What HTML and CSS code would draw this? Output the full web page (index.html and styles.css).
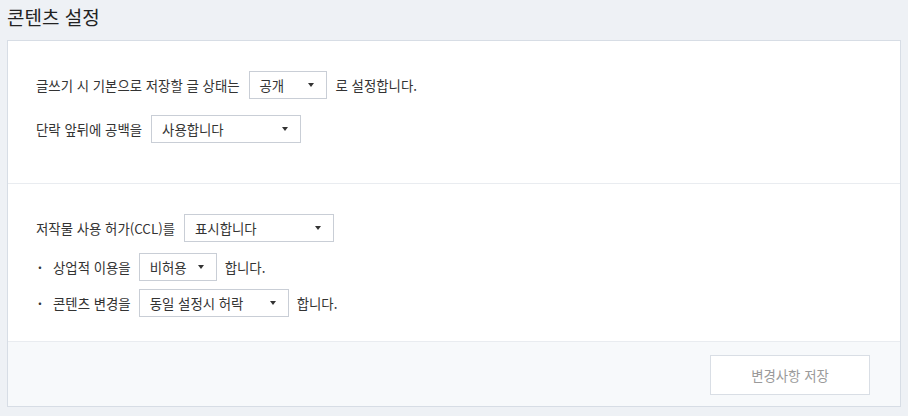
FILE: index.html
```html
<!DOCTYPE html>
<html lang="ko">
<head>
<meta charset="utf-8">
<link rel="stylesheet" href="styles.css">
</head>
<body>
<h1 class="page-title">콘텐츠 설정</h1>
<div class="panel">
  <div class="section">
    <div class="row">
      <span>글쓰기 시 기본으로 저장할 글 상태는</span>
      <span class="select w77"><span>공개</span><i class="arrow"></i></span>
      <span>로 설정합니다.</span>
    </div>
    <div class="row row-gap1">
      <span>단락 앞뒤에 공백을</span>
      <span class="select w150"><span>사용합니다</span><i class="arrow"></i></span>
    </div>
  </div>
  <div class="section section2">
    <div class="row">
      <span>저작물 사용 허가(CCL)를</span>
      <span class="select w150"><span>표시합니다</span><i class="arrow"></i></span>
    </div>
    <div class="row sub row-gap2">
      <span class="bullet">·</span>
      <span>상업적 이용을</span>
      <span class="select w77"><span>비허용</span><i class="arrow"></i></span>
      <span>합니다.</span>
    </div>
    <div class="row sub row-gap3">
      <span class="bullet">·</span>
      <span>콘텐츠 변경을</span>
      <span class="select w150"><span>동일 설정시 허락</span><i class="arrow"></i></span>
      <span>합니다.</span>
    </div>
  </div>
  <div class="footer">
    <button class="save">변경사항 저장</button>
  </div>
</div>
</body>
</html>
```
FILE: styles.css
```css
html, body {
  margin: 0;
  padding: 0;
}
body {
  background: #eef1f5;
  font-family: "Noto Sans CJK KR", "Noto Sans", sans-serif;
  color: #333;
  font-size: 13.4px;
  width: 908px;
  height: 416px;
  overflow: hidden;
}
.page-title {
  margin: 0;
  padding: 3px 0 0 7px;
  height: 37px;
  font-size: 19px;
  font-weight: 400;
  line-height: 28px;
  color: #222;
}
.panel {
  margin: 0 7px;
  background: #fff;
  border: 1px solid #d7dde5;
}
.section {
  padding: 30px 28px 40px;
  border-bottom: 1px solid #e9ecf0;
}
.section2 {
  padding-bottom: 24px;
}
.row {
  display: flex;
  align-items: center;
  gap: 9px;
  height: 28px;
}
.row-gap1 { margin-top: 16px; }
.row-gap2 { margin-top: 11px; }
.row-gap3 { margin-top: 8px; }
.sub { gap: 8px; }
.bullet {
  width: 8px;
  margin-right: 1px;
  text-align: center;
  font-weight: 700;
}
.select {
  box-sizing: border-box;
  height: 28px;
  border: 1px solid #c9ced6;
  display: flex;
  align-items: center;
  justify-content: space-between;
  padding: 0 12px 0 10px;
  background: #fff;
}
.w77 { width: 78px; }
.w150 { width: 150px; }
.arrow {
  width: 0;
  height: 0;
  border-left: 3.5px solid transparent;
  border-right: 3.5px solid transparent;
  border-top: 4px solid #333;
}
.footer {
  background: #f7f9fb;
  height: 64px;
  display: flex;
  align-items: center;
  justify-content: flex-end;
  padding-right: 30px;
}
.save {
  width: 160px;
  height: 40px;
  background: #fff;
  border: 1px solid #d9dee5;
  font-family: inherit;
  font-size: 13.4px;
  color: #9a9a9a;
  margin-top: 1px;
}
```
